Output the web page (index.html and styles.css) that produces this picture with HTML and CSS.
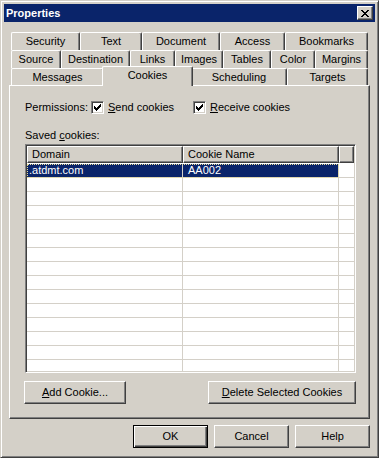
FILE: index.html
```html
<!DOCTYPE html>
<html lang="en">
<head>
    <meta charset="UTF-8">
    <title>Properties</title>
    <link rel="stylesheet" href="styles.css">
</head>
<body>
    <div class="window">
        <div class="titlebar">
            <span class="title">Properties</span>
            <div class="close-btn">
                <svg width="8" height="7" viewBox="0 0 8 7" shape-rendering="crispEdges">
                    <path d="M0 0h2v1H0z M6 0h2v1H6z M1 1h2v1H1z M5 1h2v1H5z M2 2h4v1H2z M3 3h2v1H3z M2 4h4v1H2z M1 5h2v1H1z M5 5h2v1H5z M0 6h2v1H0z M6 6h2v1H6z" fill="#000"/>
                </svg>
            </div>
        </div>

        <div class="dialog">
            <div class="tabs">
                <div class="tab-row">
                    <div class="tab tab-security">Security</div>
                    <div class="tab tab-text">Text</div>
                    <div class="tab tab-document">Document</div>
                    <div class="tab tab-access">Access</div>
                    <div class="tab tab-bookmarks">Bookmarks</div>
                </div>
                <div class="tab-row">
                    <div class="tab tab-source">Source</div>
                    <div class="tab tab-destination">Destination</div>
                    <div class="tab tab-links">Links</div>
                    <div class="tab tab-images">Images</div>
                    <div class="tab tab-tables">Tables</div>
                    <div class="tab tab-color">Color</div>
                    <div class="tab tab-margins">Margins</div>
                </div>
                <div class="tab-row last">
                    <div class="tab tab-messages">Messages</div>
                    <div class="tab tab-cookies active">Cookies</div>
                    <div class="tab tab-scheduling">Scheduling</div>
                    <div class="tab tab-targets">Targets</div>
                </div>
            </div>

            <div class="panel">
                <div class="permissions">
                    <span class="perm-label">Permissions:</span>
                    <label class="check first">
                        <span class="checkbox">
                            <svg width="7" height="7" viewBox="0 0 7 7" shape-rendering="crispEdges">
                                <path d="M0 2h1v3H0z M1 3h1v3H1z M2 4h1v3H2z M3 3h1v3H3z M4 2h1v3H4z M5 1h1v3H5z M6 0h1v3H6z" fill="#000"/>
                            </svg>
                        </span>
                        <span><u>S</u>end cookies</span>
                    </label>
                    <label class="check">
                        <span class="checkbox">
                            <svg width="7" height="7" viewBox="0 0 7 7" shape-rendering="crispEdges">
                                <path d="M0 2h1v3H0z M1 3h1v3H1z M2 4h1v3H2z M3 3h1v3H3z M4 2h1v3H4z M5 1h1v3H5z M6 0h1v3H6z" fill="#000"/>
                            </svg>
                        </span>
                        <span><u>R</u>eceive cookies</span>
                    </label>
                </div>

                <div class="saved-label">Saved <u>c</u>ookies:</div>

                <div class="listview">
                    <div class="lv-header">
                        <div class="hcell col-domain">Domain</div>
                        <div class="hcell col-name">Cookie Name</div>
                        <div class="hcell col-fill"></div>
                    </div>
                    <div class="lv-row">
                        <div class="selection">
                            <div class="cell col-domain first-cell">.atdmt.com</div>
                            <div class="cell col-name">AA002</div>
                        </div>
                        <div class="cell col-fill"></div>
                    </div>
                    <div class="lv-row"><div class="cell col-domain"></div><div class="cell col-name"></div><div class="cell col-fill"></div></div>
                    <div class="lv-row"><div class="cell col-domain"></div><div class="cell col-name"></div><div class="cell col-fill"></div></div>
                    <div class="lv-row"><div class="cell col-domain"></div><div class="cell col-name"></div><div class="cell col-fill"></div></div>
                    <div class="lv-row"><div class="cell col-domain"></div><div class="cell col-name"></div><div class="cell col-fill"></div></div>
                    <div class="lv-row"><div class="cell col-domain"></div><div class="cell col-name"></div><div class="cell col-fill"></div></div>
                    <div class="lv-row"><div class="cell col-domain"></div><div class="cell col-name"></div><div class="cell col-fill"></div></div>
                    <div class="lv-row"><div class="cell col-domain"></div><div class="cell col-name"></div><div class="cell col-fill"></div></div>
                    <div class="lv-row"><div class="cell col-domain"></div><div class="cell col-name"></div><div class="cell col-fill"></div></div>
                    <div class="lv-row"><div class="cell col-domain"></div><div class="cell col-name"></div><div class="cell col-fill"></div></div>
                    <div class="lv-row"><div class="cell col-domain"></div><div class="cell col-name"></div><div class="cell col-fill"></div></div>
                    <div class="lv-row"><div class="cell col-domain"></div><div class="cell col-name"></div><div class="cell col-fill"></div></div>
                    <div class="lv-row"><div class="cell col-domain"></div><div class="cell col-name"></div><div class="cell col-fill"></div></div>
                    <div class="lv-row"><div class="cell col-domain"></div><div class="cell col-name"></div><div class="cell col-fill"></div></div>
                    <div class="lv-row"><div class="cell col-domain"></div><div class="cell col-name"></div><div class="cell col-fill"></div></div>
                </div>

                <div class="panel-buttons">
                    <button class="btn btn-add"><u>A</u>dd Cookie...</button>
                    <button class="btn btn-delete"><u>D</u>elete Selected Cookies</button>
                </div>
            </div>

            <div class="dialog-buttons">
                <button class="btn btn-dialog default">OK</button>
                <button class="btn btn-dialog">Cancel</button>
                <button class="btn btn-dialog">Help</button>
            </div>
        </div>
    </div>
</body>
</html>
```

FILE: styles.css
```css
* {
    box-sizing: border-box;
}
body {
    margin: 0;
    background-color: #d4d0c8;
    font-family: "Liberation Sans", Arial, sans-serif;
    font-size: 11px;
    color: #000;
}
u {
    text-decoration: underline;
    text-underline-offset: 1px;
}
.window {
    width: 379px;
    height: 458px;
    background: #d4d0c8;
    border: 1px solid;
    border-color: #d4d0c8 #404040 #404040 #d4d0c8;
    box-shadow: inset 1px 1px #fff, inset -1px -1px #808080;
    padding: 3px;
}
.titlebar {
    height: 18px;
    background: #0a246a;
    display: flex;
    align-items: center;
    justify-content: space-between;
    padding: 0 2px 0 2px;
}
.title {
    color: #fff;
    font-weight: bold;
    font-size: 11px;
    line-height: 13px;
}
.close-btn {
    width: 16px;
    height: 14px;
    background: #d4d0c8;
    border: 1px solid;
    border-color: #fff #404040 #404040 #fff;
    box-shadow: inset -1px -1px #808080;
    display: flex;
    align-items: center;
    justify-content: center;
    padding-right: 1px;
}
.close-btn svg {
    display: block;
}
.dialog {
    padding: 10px 5px 0 5px;
}

/* tabs */
.tab-row {
    display: flex;
    height: 18px;
    padding-left: 2px;
}
.tab-row.last {
    height: 17px;
}
.tab {
    height: 18px;
    background: #d4d0c8;
    border-top: 1px solid #fff;
    border-left: 1px solid #fff;
    border-right: 1px solid #404040;
    border-radius: 2px 2px 0 0;
    box-shadow: inset -1px 0 #808080;
    display: flex;
    align-items: center;
    justify-content: center;
    line-height: 13px;
    white-space: nowrap;
}
.tab-row.last .tab {
    height: 17px;
}
.tab.active {
    position: relative;
    z-index: 2;
    height: 20px;
    margin: -2px -2px 0 -2px;
    padding-bottom: 2px;
}
.tab-row.last .tab.active {
    height: 20px;
}
.tab-security { width: 69px; }
.tab-text { width: 62px; }
.tab-document { width: 78px; }
.tab-access { width: 65px; }
.tab-bookmarks { width: 83px; }
.tab-source { width: 50px; }
.tab-destination { width: 69px; }
.tab-links { width: 45px; }
.tab-images { width: 48px; }
.tab-tables { width: 48px; }
.tab-color { width: 44px; }
.tab-margins { width: 53px; }
.tab-messages { width: 93px; }
.tab-cookies { width: 91px; }
.tab-scheduling { width: 96px; }
.tab-targets { width: 81px; }

/* panel */
.panel {
    width: 361px;
    height: 334px;
    border: 1px solid;
    border-color: #fff #404040 #404040 #fff;
    box-shadow: inset -1px -1px #808080;
    padding: 15px 0 0 15px;
}
.permissions {
    display: flex;
    align-items: center;
    height: 13px;
    line-height: 13px;
}
.perm-label {
    width: 66px;
}
.check {
    display: flex;
    align-items: center;
    gap: 4px;
}
.check.first {
    width: 102px;
}
.checkbox {
    width: 13px;
    height: 13px;
    background: #fff;
    border: 1px solid;
    border-color: #808080 #fff #fff #808080;
    box-shadow: inset 1px 1px #404040, inset -1px -1px #d4d0c8;
    padding: 2px;
}
.checkbox svg {
    display: block;
}
.saved-label {
    margin-top: 15px;
    height: 13px;
    line-height: 13px;
}

/* list view */
.listview {
    margin-top: 2px;
    width: 331px;
    height: 229px;
    background: #fff;
    border: 1px solid;
    border-color: #808080 #fff #fff #808080;
    box-shadow: inset 1px 1px #404040, inset -1px -1px #d4d0c8;
    padding: 1px;
    overflow: hidden;
}
.lv-header {
    display: flex;
    height: 18px;
}
.hcell {
    height: 17px;
    background: #d4d0c8;
    border: 1px solid;
    border-color: #fff #404040 #404040 #fff;
    box-shadow: inset -1px -1px #808080;
    padding-left: 4px;
    line-height: 14px;
    white-space: nowrap;
}
.col-domain {
    width: 156px;
}
.col-name {
    width: 156px;
}
.col-fill {
    flex: 1;
}
.hcell.col-fill {
    padding: 0;
}
.lv-row {
    display: flex;
    height: 14px;
}
.selection {
    display: flex;
    background: #0a246a;
    color: #fff;
    outline: 1px dotted #e8dc9a;
    outline-offset: -1px;
}
.cell {
    height: 14px;
    border-right: 1px solid #d4d0c8;
    border-bottom: 1px solid #d4d0c8;
    padding-left: 5px;
    line-height: 13px;
    white-space: nowrap;
}
.cell.col-fill {
    border-right: none;
}
.cell.first-cell {
    padding-left: 2px;
}

/* buttons */
.btn {
    height: 23px;
    background: #d4d0c8;
    border: 1px solid;
    border-color: #fff #404040 #404040 #fff;
    box-shadow: inset -1px -1px #808080;
    font-family: "Liberation Sans", Arial, sans-serif;
    font-size: 11px;
    color: #000;
    padding: 0;
    line-height: 13px;
}
.panel-buttons {
    display: flex;
    justify-content: space-between;
    width: 332px;
    margin: 8px 0 0 -1px;
}
.btn-add {
    width: 102px;
}
.btn-delete {
    width: 148px;
}
.dialog-buttons {
    display: flex;
    justify-content: flex-end;
    gap: 6px;
    margin-top: 6px;
}
.btn-dialog {
    width: 75px;
}
.btn.default {
    border: 1px solid #000;
    box-shadow: inset 1px 1px #fff, inset -1px -1px #404040, inset -2px -2px #808080;
}
```
